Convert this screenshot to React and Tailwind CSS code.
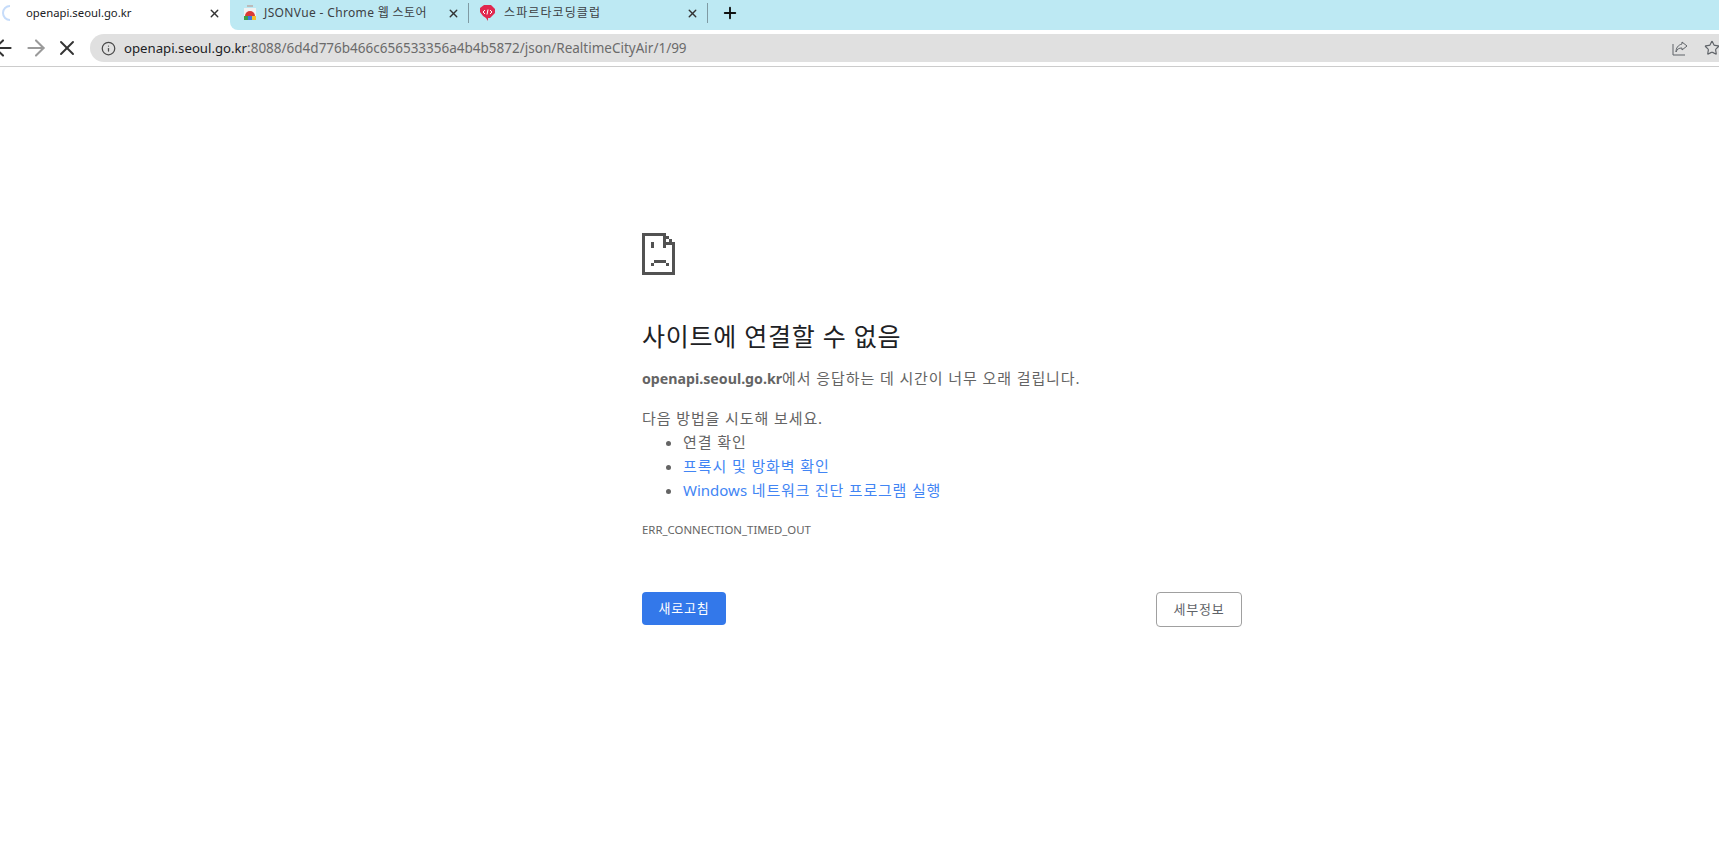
import { ArrowLeft, ArrowRight, X, Plus, Info, Star } from "lucide-react";

const font = { fontFamily: '"Noto Sans", "Noto Sans CJK KR", sans-serif' };

function Spinner() {
  return (
    <svg width="10" height="16" viewBox="0 0 10 16" className="shrink-0">
      <path d="M9 1 A7 7 0 0 0 9 15" fill="none" stroke="#c6dcfa" strokeWidth="2" />
    </svg>
  );
}

function StoreIcon() {
  return (
    <svg width="14" height="16" viewBox="0 0 14 16" className="shrink-0">
      <rect x="4" y="0" width="6" height="2" fill="#bbbbbb" />
      <rect x="1" y="3" width="12" height="12" fill="#f2f2f2" />
      <path d="M2 11 A5 5 0 0 1 12 11 Z" fill="#d93a36" />
      <rect x="1" y="11" width="4" height="4" fill="#3ca14b" />
      <rect x="5" y="11" width="4" height="4" fill="#3b78e0" />
      <rect x="9" y="11" width="4" height="4" fill="#f5c02c" />
    </svg>
  );
}

function SpartaIcon() {
  return (
    <svg width="17" height="18" viewBox="0 0 17 18" className="shrink-0">
      <path d="M5 1 L12 1 L16 5 L16 9 L11 14 L9 14 L9 17 L7 14 L4 12 L1 8 L1 4 Z" fill="#e0284f" />
      <path d="M6 6 L4 8 L6 10 M11 6 L13 8 L11 10 M9 5.5 L8 10.5" fill="none" stroke="#fff" strokeWidth="1" />
    </svg>
  );
}

function ShareIcon() {
  return (
    <svg width="16" height="15" viewBox="0 0 16 15" fill="none" stroke="#5f6368" strokeWidth="1">
      <path d="M1 3 V14 H13" />
      <path d="M10 1 L15 5 L10 9 V7 C7 7 5 8 4 11 C4 7 6 4 10 3 Z" />
    </svg>
  );
}

function SadPage() {
  return (
    <svg width="33" height="42" viewBox="0 0 33 42" fill="#525252" className="block">
      <rect x="0" y="0" width="24" height="3" />
      <rect x="0" y="0" width="3" height="42" />
      <rect x="0" y="39" width="33" height="3" />
      <rect x="30" y="9" width="3" height="33" />
      <rect x="21" y="0" width="3" height="15" />
      <rect x="21" y="9" width="12" height="3" />
      <rect x="24" y="3" width="3" height="3" />
      <rect x="27" y="6" width="3" height="3" />
      <rect x="9" y="9" width="3" height="6" />
      <rect x="12" y="27" width="12" height="3" />
      <rect x="9" y="30" width="3" height="3" />
      <rect x="24" y="30" width="3" height="3" />
    </svg>
  );
}

function Divider() {
  return <div className="w-px h-[20px] bg-[#7f9aa3] shrink-0" />;
}

export default function App() {
  return (
    <div className="min-h-screen bg-white overflow-hidden" style={font}>
      {/* tab strip */}
      <div className="flex h-[30px] bg-white">
        <div className="flex items-center w-[230px] pl-[1px] pr-[9px] pb-[4px] gap-[15px] text-[11.3px] text-[#202124]">
          <Spinner />
          <span className="flex-1">openapi.seoul.go.kr</span>
          <X size={13} strokeWidth={2.5} className="text-[#333]" />
        </div>
        <div className="flex-1 flex items-center bg-[#bde9f3] rounded-bl-[8px] text-[12px] text-[#3c4043] pb-[4px]">
          <div className="flex items-center w-[238px] pl-[13px] pr-[8px] gap-[7px]">
            <StoreIcon />
            <span className="flex-1 tracking-[0.35px]">JSONVue - Chrome 웹 스토어</span>
            <X size={13} strokeWidth={2.5} className="text-[#333]" />
          </div>
          <Divider />
          <div className="flex items-center w-[238px] pl-[10px] pr-[8px] gap-[8px]">
            <SpartaIcon />
            <span className="flex-1 tracking-[1.1px]">스파르타코딩클럽</span>
            <X size={13} strokeWidth={2.5} className="text-[#333]" />
          </div>
          <Divider />
          <Plus size={18} strokeWidth={2.5} className="ml-[13px] text-[#111]" />
        </div>
      </div>

      {/* toolbar */}
      <div className="flex items-start h-[37px] border-b border-[#cccccc] pt-[4px]">
        <div className="flex items-center h-[28px] w-[100px] shrink-0 -ml-[10px] gap-[6.5px]">
          <ArrowLeft size={26} strokeWidth={1.9} className="text-[#333] shrink-0" />
          <ArrowRight size={26} strokeWidth={1.9} className="text-[#9a9a9a] shrink-0" />
          <X size={24} strokeWidth={1.9} className="text-[#333] shrink-0" />
        </div>
        <div className="flex-1 flex items-center h-[28px] bg-[#e0e0e0] rounded-l-[14px] pl-[11px]">
          <Info size={15} strokeWidth={2} className="text-[#4a4a4a] shrink-0" />
          <div className="flex-1 ml-[8px] text-[13.5px] text-[#6b6b6b] whitespace-nowrap">
            <span className="text-[13.2px] text-[#202124]">openapi.seoul.go.kr</span>:8088/6d4d776b466c656533356a4b4b5872/json/RealtimeCityAir/1/99
          </div>
          <div className="flex items-center gap-[16px] -mr-[1px]">
            <ShareIcon />
            <Star size={16} strokeWidth={1.75} className="text-[#5f6368]" />
          </div>
        </div>
      </div>

      {/* error page */}
      <div className="w-[600px] ml-[642px] pt-[166px] text-[15px] text-[#646464] tracking-[0.9px]">
        <SadPage />
        <h1 className="mt-[43px] text-[25px] leading-[36px] tracking-[0.75px] text-[#202124]">사이트에 연결할 수 없음</h1>
        <p className="mt-[12px] leading-[24px]">
          <b className="font-bold text-[14.2px] tracking-normal">openapi.seoul.go.kr</b>에서 응답하는 데 시간이 너무 오래 걸립니다.
        </p>
        <p className="mt-[15px] leading-[24px]">다음 방법을 시도해 보세요.</p>
        <ul className="list-disc pl-[41px] leading-[24px]">
          <li>연결 확인</li>
          <li><span className="text-[#4285f4]">프록시 및 방화벽 확인</span></li>
          <li><span className="text-[#4285f4] tracking-[0.8px]"><span className="tracking-normal">Windows</span> 네트워크 진단 프로그램 실행</span></li>
        </ul>
        <div className="mt-[16px] text-[11.4px] leading-[24px] tracking-normal">ERR_CONNECTION_TIMED_OUT</div>
        <div className="mt-[50px] flex items-start justify-between">
          <button className="w-[84px] h-[33px] rounded-[4px] bg-[#3378ea] text-white text-[13px] tracking-[0.8px]">새로고침</button>
          <button className="w-[86px] h-[35px] rounded-[4px] border border-[#a0a0a0] bg-white text-[#5f6368] text-[13px] tracking-[0.8px]">세부정보</button>
        </div>
      </div>
    </div>
  );
}
